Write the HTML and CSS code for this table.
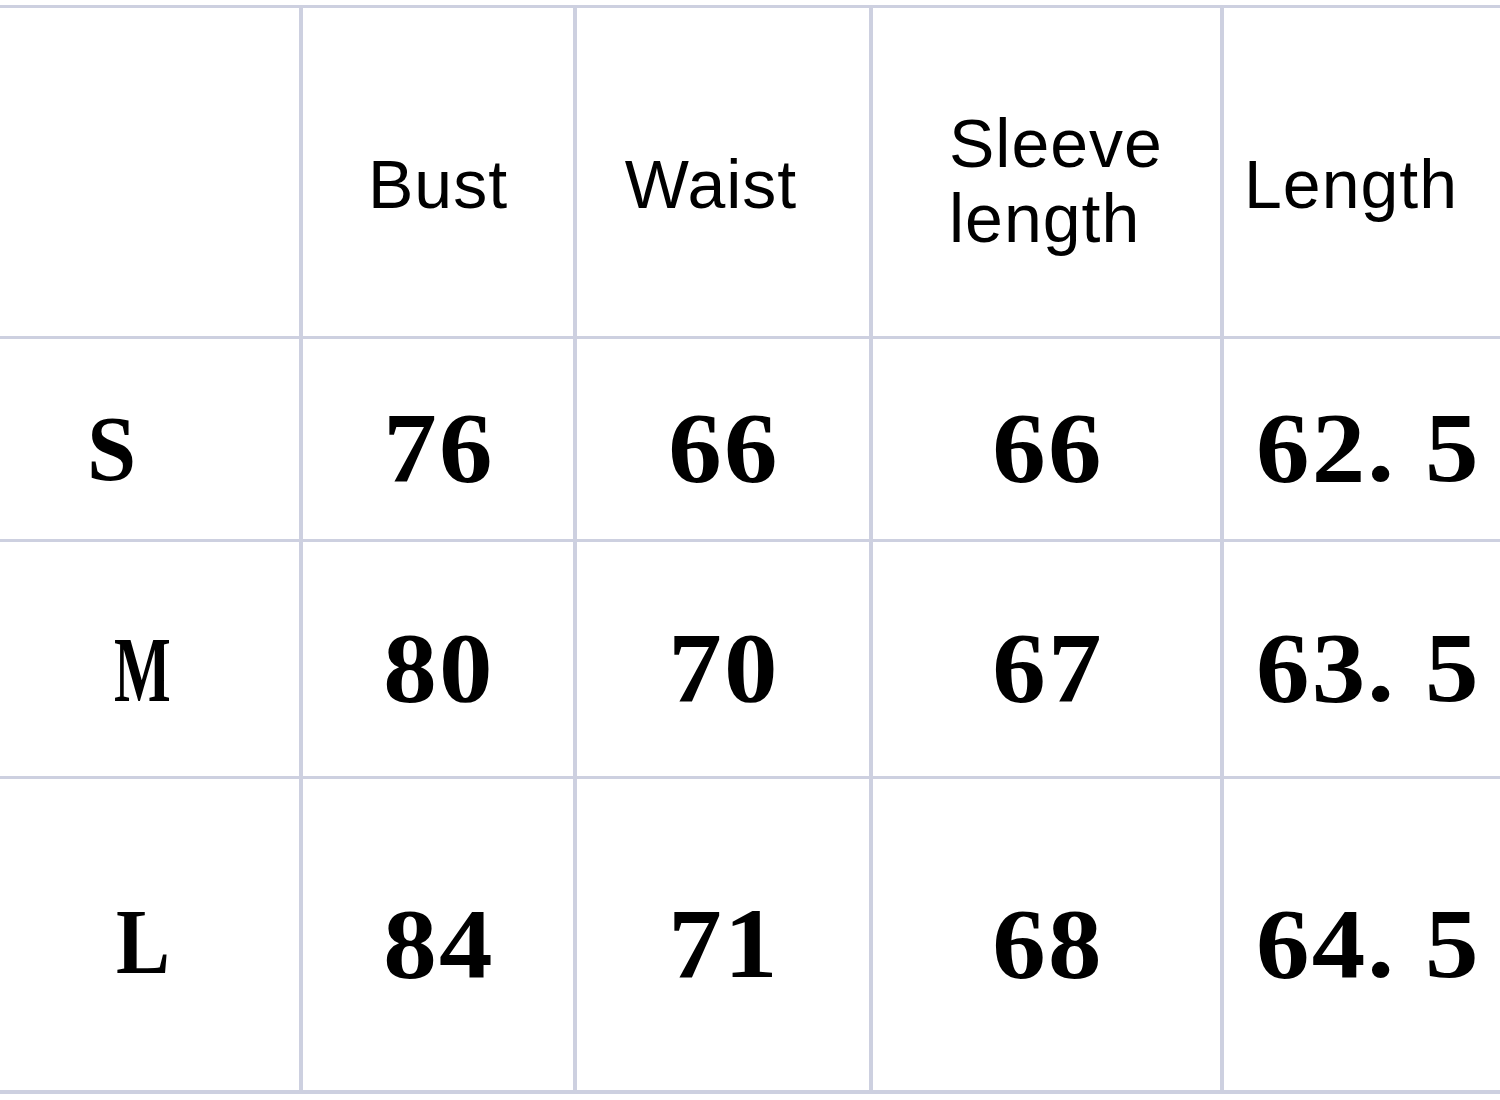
FILE: index.html
```html
<!DOCTYPE html>
<html>
<head>
<meta charset="utf-8">
<link rel="stylesheet" href="styles.css">
</head>
<body>
<div class="chart">
  <div class="cell head"></div>
  <div class="cell head center">Bust</div>
  <div class="cell head center waist">Waist</div>
  <div class="cell head sleeve">Sleeve<br>length</div>
  <div class="cell head length">Length</div>

  <div class="cell label lbl-s"><span class="glyph s">S</span></div>
  <div class="cell num center"><span class="val">76</span></div>
  <div class="cell num center"><span class="val">66</span></div>
  <div class="cell num center"><span class="val">66</span></div>
  <div class="cell num last"><span class="val">62. 5</span></div>

  <div class="cell label lbl-m"><span class="glyph m">M</span></div>
  <div class="cell num center"><span class="val">80</span></div>
  <div class="cell num center"><span class="val">70</span></div>
  <div class="cell num center"><span class="val">67</span></div>
  <div class="cell num last"><span class="val">63. 5</span></div>

  <div class="cell label lbl-l"><span class="glyph l">L</span></div>
  <div class="cell num center"><span class="val">84</span></div>
  <div class="cell num center"><span class="val">71</span></div>
  <div class="cell num center"><span class="val">68</span></div>
  <div class="cell num last"><span class="val">64. 5</span></div>
</div>
</body>
</html>
```

FILE: styles.css
```css
html, body {
  margin: 0;
  padding: 0;
  background: #ffffff;
}

body {
  width: 1500px;
  height: 1100px;
  overflow: hidden;
}

.chart {
  margin-top: 5px;
  padding: 3px 0 4px 0;
  background: #cdd0e0;
  display: grid;
  grid-template-columns: 299px 270px 292px 347px 276px;
  grid-template-rows: 328px 200px 234px 311px;
  column-gap: 4px;
  row-gap: 3px;
}

.cell {
  background: #ffffff;
  display: flex;
  align-items: center;
  color: #000000;
  box-sizing: border-box;
}

.center {
  justify-content: center;
}

.head {
  font-family: "Liberation Sans", Arial, sans-serif;
  font-size: 68px;
  line-height: 75px;
  padding-top: 24px;
  letter-spacing: 1px;
}

.waist {
  padding-right: 24px;
}

.sleeve {
  padding-left: 76px;
  padding-top: 18px;
}

.length {
  padding-left: 20px;
}

.num {
  font-family: "Liberation Serif", "Times New Roman", serif;
  font-weight: bold;
  font-size: 100px;
  line-height: 1;
  padding-top: 18px;
  letter-spacing: 2px;
}

.num.center {
  padding-left: 2px;
}

.val {
  display: inline-block;
  transform: scaleX(1.07);
  transform-origin: center center;
}

.last {
  padding-left: 32px;
}

.last .val {
  transform-origin: left center;
}

.label {
  font-family: "Liberation Serif", "Times New Roman", serif;
  font-weight: bold;
  font-size: 94px;
  line-height: 1;
  padding-top: 18px;
}

.glyph {
  display: inline-block;
  transform-origin: left center;
}

.lbl-s { padding-left: 87px; }
.lbl-m { padding-left: 114px; padding-top: 20px; }
.lbl-l { padding-left: 116px; padding-top: 12px; }

.glyph.s { transform: scaleX(0.94); }
.glyph.m { transform: scaleX(0.64); }
.glyph.l { transform: scaleX(0.86); }
```
